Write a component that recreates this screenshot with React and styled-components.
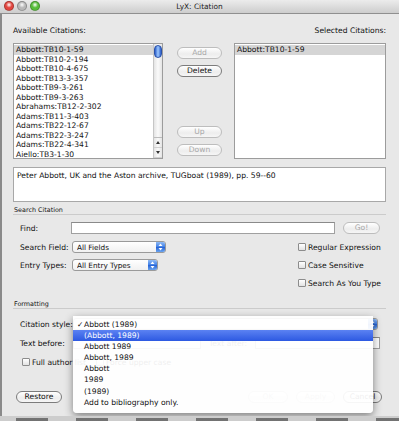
import React from "react";
import styled, { createGlobalStyle } from "styled-components";

const GlobalStyle = createGlobalStyle`
  html, body {
    margin: 0;
    padding: 0;
    background: #cfcfcf;
  }
  body {
    font-family: "DejaVu Sans", "Liberation Sans", sans-serif;
    font-size: 7.6px;
    color: #111;
  }
`;

const citations = [
  "Abbott:TB10-1-59",
  "Abbott:TB10-2-194",
  "Abbott:TB10-4-675",
  "Abbott:TB13-3-357",
  "Abbott:TB9-3-261",
  "Abbott:TB9-3-263",
  "Abrahams:TB12-2-302",
  "Adams:TB11-3-403",
  "Adams:TB22-12-67",
  "Adams:TB22-3-247",
  "Adams:TB22-4-341",
  "Aiello:TB3-1-30",
];

const styles = [
  "Abbott (1989)",
  "(Abbott, 1989)",
  "Abbott 1989",
  "Abbott, 1989",
  "Abbott",
  "1989",
  "(1989)",
  "Add to bibliography only.",
];

function UpDown() {
  return (
    <svg width="5" height="8" viewBox="0 0 5 8">
      <path d="M2.5 0.5 L4.5 3 L0.5 3 Z" fill="#fff" />
      <path d="M2.5 7.5 L4.5 5 L0.5 5 Z" fill="#fff" />
    </svg>
  );
}

function Triangle({ down }) {
  return (
    <svg width="4" height="3" viewBox="0 0 4 3">
      <path d={down ? "M0 0 L4 0 L2 3 Z" : "M2 0 L4 3 L0 3 Z"} fill="#333" />
    </svg>
  );
}

export default function App() {
  return (
    <>
      <GlobalStyle />
      <Window>
        <TitleBar>
          <Lights>
            <Light $color="#e2463f" />
            <Light $color="#b9b9b9" />
            <Light $color="#58bd3a" />
          </Lights>
          <Title>LyX: Citation</Title>
        </TitleBar>

        <Content>
          <HeaderRow>
            <span>Available Citations:</span>
            <span>Selected Citations:</span>
          </HeaderRow>

          <ListsRow>
            <ListBox $width={150}>
              <ListRows>
                {citations.map((c, i) => (
                  <ListRow key={c} $selected={i === 0}>
                    {c}
                  </ListRow>
                ))}
              </ListRows>
              <ScrollBar>
                <Thumb />
                <ScrollArrows>
                  <ScrollArrow>
                    <Triangle />
                  </ScrollArrow>
                  <ScrollArrow>
                    <Triangle down />
                  </ScrollArrow>
                </ScrollArrows>
              </ScrollBar>
            </ListBox>

            <ButtonColumn>
              <PillButton $disabled $width={45}>Add</PillButton>
              <PillButton $width={45}>Delete</PillButton>
              <Spacer />
              <PillButton $disabled $width={45}>Up</PillButton>
              <PillButton $disabled $width={45}>Down</PillButton>
            </ButtonColumn>

            <ListBox $width={152}>
              <ListRows>
                <ListRow $selected>Abbott:TB10-1-59</ListRow>
              </ListRows>
            </ListBox>
          </ListsRow>

          <InfoBox>
            Peter Abbott, UK and the Aston archive, TUGboat (1989), pp. 59--60
          </InfoBox>

          <GroupTitle $top={4}>Search Citation</GroupTitle>

          <FormRow $top={7}>
            <FieldLabel $width={51}>Find:</FieldLabel>
            <TextInput $width={264} />
            <PillButton $disabled $width={37} style={{ marginLeft: 8 }}>
              Go!
            </PillButton>
          </FormRow>

          <FormRow $top={7}>
            <FieldLabel $width={52}>Search Field:</FieldLabel>
            <Select $width={94}>
              <SelectText>All Fields</SelectText>
              <SelectArrow>
                <UpDown />
              </SelectArrow>
            </Select>
            <CheckColumn>
              <Check label="Regular Expression" />
            </CheckColumn>
          </FormRow>

          <FormRow $top={6}>
            <FieldLabel $width={52}>Entry Types:</FieldLabel>
            <Select $width={86}>
              <SelectText>All Entry Types</SelectText>
              <SelectArrow>
                <UpDown />
              </SelectArrow>
            </Select>
            <CheckColumn>
              <Check label="Case Sensitive" />
            </CheckColumn>
          </FormRow>

          <FormRow $top={6}>
            <CheckColumn>
              <Check label="Search As You Type" />
            </CheckColumn>
          </FormRow>

          <GroupTitle $top={11}>Formatting</GroupTitle>

          <FormRow $top={9}>
            <FieldLabel $width={53}>Citation style:</FieldLabel>
            <ComboWrap>
              <Select $width={305}>
                <SelectText />
                <SelectArrow>
                  <UpDown />
                </SelectArrow>
              </Select>
              <PopupMenu>
                {styles.map((s, i) => (
                  <MenuItem key={s} $active={i === 1}>
                    <CheckMark>{i === 0 ? "✓" : ""}</CheckMark>
                    {s}
                  </MenuItem>
                ))}
              </PopupMenu>
            </ComboWrap>
          </FormRow>

          <FormRow $top={7}>
            <FieldLabel $width={53}>Text before:</FieldLabel>
            <TextInput $width={130} />
            <FieldLabel $width={46} style={{ marginLeft: 8, color: "#333" }}>
              Text after:
            </FieldLabel>
            <TextInput $width={127} />
          </FormRow>

          <FormRow $top={7} $indent={9}>
            <Check label="Full author list" />
            <Check label="Force upper case" gap={10} />
          </FormRow>

          <ButtonsRow>
            <PillButton $width={46}>Restore</PillButton>
            <RightButtons>
              <PillButton $disabled $width={40}>OK</PillButton>
              <PillButton $disabled $width={39}>Apply</PillButton>
              <PillButton $width={39}>Cancel</PillButton>
            </RightButtons>
          </ButtonsRow>
        </Content>
      </Window>
      <BehindStrip />
    </>
  );
}

function Check({ label, gap = 0 }) {
  return (
    <CheckItem style={gap ? { marginLeft: gap } : undefined}>
      <CheckBox />
      <span>{label}</span>
    </CheckItem>
  );
}

const Window = styled.div`
  width: 399px;
  height: 416px;
  background: #e8e8e8;
  display: flex;
  flex-direction: column;
  overflow: hidden;
  box-shadow: 0 1px 3px rgba(0, 0, 0, 0.5);
`;

const TitleBar = styled.div`
  height: 13px;
  flex-shrink: 0;
  position: relative;
  display: flex;
  align-items: center;
  justify-content: center;
  background: linear-gradient(#ececec, #cdcdcd);
  border-bottom: 1px solid #8f8f8f;
`;

const Lights = styled.div`
  position: absolute;
  left: 4px;
  top: 1px;
  display: flex;
  gap: 3px;
`;

const Light = styled.div`
  width: 10px;
  height: 10px;
  border-radius: 50%;
  box-sizing: border-box;
  border: 1px solid rgba(0, 0, 0, 0.25);
  background: radial-gradient(
    circle at 50% 35%,
    #ffffff 0%,
    ${(p) => p.$color} 45%,
    ${(p) => p.$color} 100%
  );
`;

const Title = styled.div`
  font-size: 7.4px;
  color: #222;
`;

const Content = styled.div`
  flex: 1;
  display: flex;
  flex-direction: column;
  padding: 0 13px 0 11px;
  border-left: 2px solid #8a8a8a;
`;

const HeaderRow = styled.div`
  margin-top: 12px;
  height: 10px;
  line-height: 10px;
  display: flex;
  justify-content: space-between;
`;

const ListsRow = styled.div`
  margin-top: 7px;
  height: 116px;
  display: flex;
`;

const ListBox = styled.div`
  width: ${(p) => p.$width}px;
  box-sizing: border-box;
  border: 1px solid #9c9c9c;
  background: #fff;
  display: flex;
  overflow: hidden;
`;

const ListRows = styled.div`
  flex: 1;
  padding-top: 1px;
`;

const ListRow = styled.div`
  height: 9.5px;
  line-height: 9.5px;
  padding-left: 2px;
  white-space: nowrap;
  background: ${(p) => (p.$selected ? "#d5d5d5" : "transparent")};
`;

const ScrollBar = styled.div`
  width: 8px;
  flex-shrink: 0;
  border-left: 1px solid #c6c6c6;
  background: linear-gradient(90deg, #e4e4e4, #fafafa 50%, #e4e4e4);
  display: flex;
  flex-direction: column;
  justify-content: space-between;
`;

const Thumb = styled.div`
  margin: 1px 0 0 0;
  height: 13px;
  border-radius: 4px;
  border: 1px solid #2b52a8;
  box-sizing: border-box;
  background: linear-gradient(90deg, #2a5cc9, #9cc8ff 50%, #2a5cc9);
`;

const ScrollArrows = styled.div`
  display: flex;
  flex-direction: column;
  border-top: 1px solid #bcbcbc;
`;

const ScrollArrow = styled.div`
  height: 9px;
  display: flex;
  align-items: center;
  justify-content: center;
  border-bottom: 1px solid #d0d0d0;
`;

const ButtonColumn = styled.div`
  margin: 4px 12px 0 14px;
  display: flex;
  flex-direction: column;
  gap: 6px;
  padding-bottom: 3px;
`;

const Spacer = styled.div`
  flex: 1;
`;

const PillButton = styled.div`
  width: ${(p) => p.$width}px;
  height: 12px;
  box-sizing: border-box;
  flex-shrink: 0;
  border-radius: 7px;
  border: 1px solid ${(p) => (p.$disabled ? "#bdbdbd" : "#7c7c7c")};
  background: linear-gradient(#ffffff, #ededed 60%, #f6f6f6);
  color: ${(p) => (p.$disabled ? "#a9a9a9" : "#111")};
  display: flex;
  align-items: center;
  justify-content: center;
  line-height: 1;
`;

const InfoBox = styled.div`
  margin-top: 8px;
  height: 35px;
  box-sizing: border-box;
  border: 1px solid #a8a8a8;
  background: #fff;
  padding: 3px 3px;
  line-height: 9px;
`;

const GroupTitle = styled.div`
  margin-top: ${(p) => p.$top}px;
  height: 8px;
  line-height: 8px;
  font-size: 6.4px;
  padding-left: 1px;
  border-bottom: 1px solid #cbcbcb;
`;

const FormRow = styled.div`
  margin-top: ${(p) => p.$top}px;
  height: 12px;
  display: flex;
  align-items: center;
  padding: 0 6px 0 ${(p) => p.$indent ?? 7}px;
`;

const FieldLabel = styled.div`
  width: ${(p) => p.$width}px;
  flex-shrink: 0;
  white-space: nowrap;
`;

const TextInput = styled.div`
  width: ${(p) => p.$width}px;
  height: 12px;
  box-sizing: border-box;
  border: 1px solid #a0a0a0;
  border-top-color: #8a8a8a;
  background: #fff;
`;

const Select = styled.div`
  width: ${(p) => p.$width}px;
  height: 12px;
  box-sizing: border-box;
  border: 1px solid #9a9a9a;
  border-radius: 3px;
  background: linear-gradient(#ffffff, #f1f1f1);
  display: flex;
  align-items: center;
  padding-left: 4px;
  overflow: hidden;
`;

const SelectText = styled.span`
  flex: 1;
  min-width: 0;
  overflow: hidden;
  white-space: nowrap;
  font-size: 7.3px;
`;

const SelectArrow = styled.div`
  width: 9px;
  height: 100%;
  flex-shrink: 0;
  display: flex;
  align-items: center;
  justify-content: center;
  background: linear-gradient(#8fbaf5, #3e7ee6 50%, #2a66d6 55%, #6aa4ef);
`;

const CheckColumn = styled.div`
  margin-left: auto;
  width: 82px;
  display: flex;
`;

const CheckItem = styled.div`
  display: flex;
  align-items: center;
  gap: 2px;
  white-space: nowrap;
`;

const CheckBox = styled.div`
  width: 8px;
  height: 8px;
  box-sizing: border-box;
  border: 1px solid #8c8c8c;
  border-radius: 1px;
  background: linear-gradient(#ffffff, #e2e2e2);
`;

const ComboWrap = styled.div`
  position: relative;
`;

const PopupMenu = styled.div`
  position: absolute;
  left: 0;
  top: -2px;
  width: 300px;
  height: 97px;
  box-sizing: border-box;
  padding: 3px 0 6px;
  background: rgba(255, 255, 255, 0.93);
  border-radius: 0 0 4px 4px;
  box-shadow: 0 3px 8px rgba(0, 0, 0, 0.45);
  z-index: 2;
`;

const MenuItem = styled.div`
  height: 11.1px;
  line-height: 11.1px;
  display: flex;
  white-space: nowrap;
  color: ${(p) => (p.$active ? "#fff" : "#111")};
  background: ${(p) =>
    p.$active ? "linear-gradient(#5b82f2, #2d59e2)" : "transparent"};
`;

const CheckMark = styled.span`
  width: 11px;
  padding-left: 4px;
  box-sizing: border-box;
  flex-shrink: 0;
`;

const ButtonsRow = styled.div`
  margin-top: 23px;
  display: flex;
  align-items: center;
  padding: 0 4px 0 3px;
`;

const RightButtons = styled.div`
  margin-left: auto;
  display: flex;
  gap: 8px;
`;

const BehindStrip = styled.div`
  width: 399px;
  height: 5px;
  background:
    repeating-linear-gradient(
      90deg,
      transparent 0 16px,
      rgba(40, 40, 40, 0.55) 16px 48px,
      transparent 48px 60px
    ) 0 2px / 100% 3px no-repeat,
    #cdcdcd;
`;
